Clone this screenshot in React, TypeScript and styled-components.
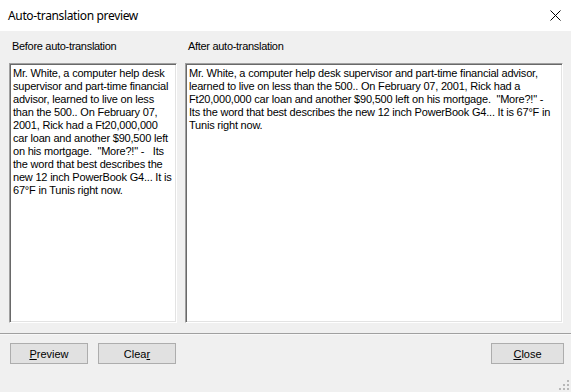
import styled, { createGlobalStyle } from "styled-components";

const GlobalStyle = createGlobalStyle`
    html, body {
        margin: 0;
        padding: 0;
        background: #f0f0f0;
    }
`

const Window = styled.div`
    width: 571px;
    height: 392px;
    display: flex;
    flex-direction: column;
    background: #f0f0f0;
    font-family: "Liberation Sans", Arial, sans-serif;
    font-size: 11px;
    color: #000;
    position: relative;
    overflow: hidden;
`

const TitleBar = styled.div`
    height: 31px;
    flex: none;
    background: #fff;
    display: flex;
    align-items: center;
    justify-content: space-between;
    padding: 0 0 0 8px;
`

const Title = styled.span`
    font-family: "Noto Sans", "Liberation Sans", sans-serif;
    font-size: 12px;
    letter-spacing: -0.35px;
    color: #000;
`

const CloseGlyph = styled.div`
    width: 32px;
    height: 31px;
    display: flex;
    align-items: center;
    justify-content: center;
`

const Panes = styled.div`
    display: grid;
    grid-template-columns: 168px 378px;
    grid-template-rows: 32px 260px;
    column-gap: 8px;
    padding-left: 9px;
`

const PaneLabel = styled.div`
    padding: 9px 0 0 3px;
    line-height: 13px;
    letter-spacing: -0.3px;
`

const TextBox = styled.div`
    box-sizing: border-box;
    background: #fff;
    border-style: solid;
    border-width: 1px;
    border-color: #a0a0a0 #fff #fff #a0a0a0;
    box-shadow: inset 1px 1px 0 #696969, inset -1px -1px 0 #e3e3e3;
    padding: 3px 2px 0 3px;
    line-height: 13px;
    letter-spacing: -0.2px;
    white-space: pre;
    overflow: hidden;
`

const Separator = styled.div`
    margin-top: 10px;
    height: 1px;
    background: #a0a0a0;
    border-bottom: 1px solid #f8f8f8;
`

const ButtonRow = styled.div`
    display: flex;
    padding: 8px 7px 0 10px;
    gap: 10px;
`

const Button = styled.button<{ $push?: boolean }>`
    box-sizing: border-box;
    width: ${p => (p.$push ? "73px" : "78px")};
    height: 21px;
    margin-left: ${p => (p.$push ? "auto" : "0")};
    background: #e1e1e1;
    border: 1px solid #adadad;
    font-family: "Liberation Sans", Arial, sans-serif;
    font-size: 11px;
    color: #000;
    padding: 0;
    u {
        text-underline-offset: 1px;
    }
`

const SizeGrip = styled.svg`
    position: absolute;
    right: 1px;
    bottom: 1px;
`

const before = [
    "Mr. White, a computer help desk",
    "supervisor and part-time financial",
    "advisor, learned to live on less",
    "than the 500.. On February 07,",
    "2001, Rick had a Ft20,000,000",
    "car loan and another $90,500 left",
    "on his mortgage.  \"More?!\" -   Its",
    "the word that best describes the",
    "new 12 inch PowerBook G4... It is",
    "67°F in Tunis right now.",
].join("\n")

const after = [
    "Mr. White, a computer help desk supervisor and part-time financial advisor,",
    "learned to live on less than the 500.. On February 07, 2001, Rick had a",
    "Ft20,000,000 car loan and another $90,500 left on his mortgage.  \"More?!\" -",
    "Its the word that best describes the new 12 inch PowerBook G4... It is 67°F in",
    "Tunis right now.",
].join("\n")

export default function App() {
    return <Window>
        <GlobalStyle />
        <TitleBar>
            <Title>Auto-translation preview</Title>
            <CloseGlyph>
                <svg width="11" height="11" viewBox="0 0 11 11">
                    <path d="M0.5 0.5 L10.5 10.5 M10.5 0.5 L0.5 10.5" stroke="#000" strokeWidth="1" fill="none" />
                </svg>
            </CloseGlyph>
        </TitleBar>
        <Panes>
            <PaneLabel>Before auto-translation</PaneLabel>
            <PaneLabel>After auto-translation</PaneLabel>
            <TextBox>{before}</TextBox>
            <TextBox>{after}</TextBox>
        </Panes>
        <Separator />
        <ButtonRow>
            <Button><u>P</u>review</Button>
            <Button>Clea<u>r</u></Button>
            <Button $push><u>C</u>lose</Button>
        </ButtonRow>
        <SizeGrip width="11" height="11" viewBox="0 0 11 11">
            {[[8, 0], [8, 4], [4, 4], [8, 8], [4, 8], [0, 8]].map(([x, y]) =>
                <rect key={`${x}-${y}`} x={x} y={y} width="2" height="2" fill="#b8b8b8" />
            )}
        </SizeGrip>
    </Window>
}
